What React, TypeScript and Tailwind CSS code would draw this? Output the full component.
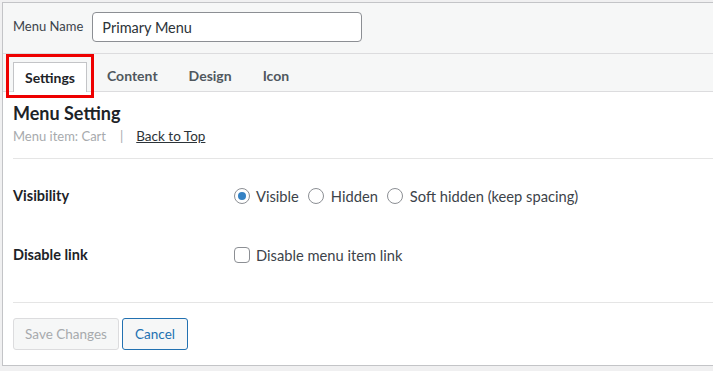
import React from "react";

export default function App() {
  const font = { fontFamily: '"Lato", "Open Sans", sans-serif' };
  return (
    <div className="min-h-screen bg-[#f0f0f1] pl-[2px] pt-[2px] text-[#1d2327]" style={font}>
      <div className="h-[364px] border border-r-0 border-[#c3c4c7] bg-white flex flex-col">
        {/* header */}
        <div className="h-[51px] shrink-0 bg-[#f6f7f7] border-b border-[#dcdcde] flex items-center pl-[10px] pb-[2px]">
          <label className="text-[13px] text-[#3c434a] mr-[9px]">Menu Name</label>
          <input
            readOnly
            value="Primary Menu"
            className="w-[270px] h-[30px] rounded-[4px] border border-[#8c8f94] bg-white px-[9px] text-[14.5px] text-[#2c3338] outline-none"
            style={font}
          />
        </div>
        {/* tabs */}
        <div className="h-[38px] shrink-0 bg-[#f6f7f7] border-b border-[#dcdcde] flex items-end pl-[10px] gap-[9px]">
          <div className="relative h-[30px] -mb-px">
            <div className="h-full w-[74px] justify-center bg-white border border-b-0 border-[#c3c4c7] flex items-center text-[14px] font-bold text-[#1d2327] pb-[1px]">
              Settings
            </div>
            <div className="absolute left-[-7px] right-[-7px] top-[-8px] bottom-[-6px] border-[3px] border-[#ee0000] pointer-events-none" />
          </div>
          <div className="h-[30px] px-[11px] flex items-center text-[14px] font-bold text-[#50575e] pb-[1px]">Content</div>
          <div className="h-[30px] px-[11px] flex items-center text-[14px] font-bold text-[#50575e] pb-[1px]">Design</div>
          <div className="h-[30px] px-[11px] flex items-center text-[14px] font-bold text-[#50575e] pb-[1px]">Icon</div>
        </div>
        {/* content */}
        <div className="flex-1 pl-[10px] flex flex-col">
          <h2 className="mt-[10px] text-[18px] font-bold leading-[22px] text-[#1d2327]">Menu Setting</h2>
          <div className="mt-[3px] text-[13px] leading-[18px] flex items-center">
            <span className="text-[#a7aaad]">Menu item: Cart</span>
            <span className="text-[#a7aaad] ml-[14px] mr-[13px]">|</span>
            <a className="underline text-[13.5px] text-[#2c3338]">Back to Top</a>
          </div>
          <div className="mt-[13px] border-t border-[#e5e5e5]" />
          <div className="h-[76px] flex items-center pb-[2px]">
            <div className="w-[221px] text-[14.5px] font-bold">Visibility</div>
            <div className="flex items-center text-[14.7px] text-[#3c434a]">
              <span className="w-[16px] h-[16px] rounded-full border border-[#8c8f94] flex items-center justify-center">
                <span className="w-[8px] h-[8px] rounded-full bg-[#3582c4]" />
              </span>
              <span className="ml-[6px] mr-[9px]">Visible</span>
              <span className="w-[16px] h-[16px] rounded-full border border-[#8c8f94]" />
              <span className="ml-[7px] mr-[9px]">Hidden</span>
              <span className="w-[16px] h-[16px] rounded-full border border-[#8c8f94]" />
              <span className="ml-[7px]">Soft hidden (keep spacing)</span>
            </div>
          </div>
          <div className="h-[40px] flex items-center">
            <div className="w-[221px] text-[14.5px] font-bold">Disable link</div>
            <div className="flex items-center text-[14.7px] text-[#3c434a]">
              <span className="w-[16px] h-[16px] rounded-[4px] border border-[#8c8f94]" />
              <span className="ml-[6px]">Disable menu item link</span>
            </div>
          </div>
          <div className="mt-[27px] border-t border-[#e5e5e5]" />
          <div className="mt-[15px] flex gap-[3px]">
            <button className="h-[32px] w-[106px] rounded-[3px] border border-[#dcdcde] bg-[#f6f7f7] text-[13.5px] text-[#a7aaad]" style={font}>
              Save Changes
            </button>
            <button className="h-[32px] w-[66px] rounded-[3px] border border-[#2271b1] bg-[#f6f7f7] text-[13.5px] text-[#2271b1]" style={font}>
              Cancel
            </button>
          </div>
        </div>
      </div>
    </div>
  );
}
